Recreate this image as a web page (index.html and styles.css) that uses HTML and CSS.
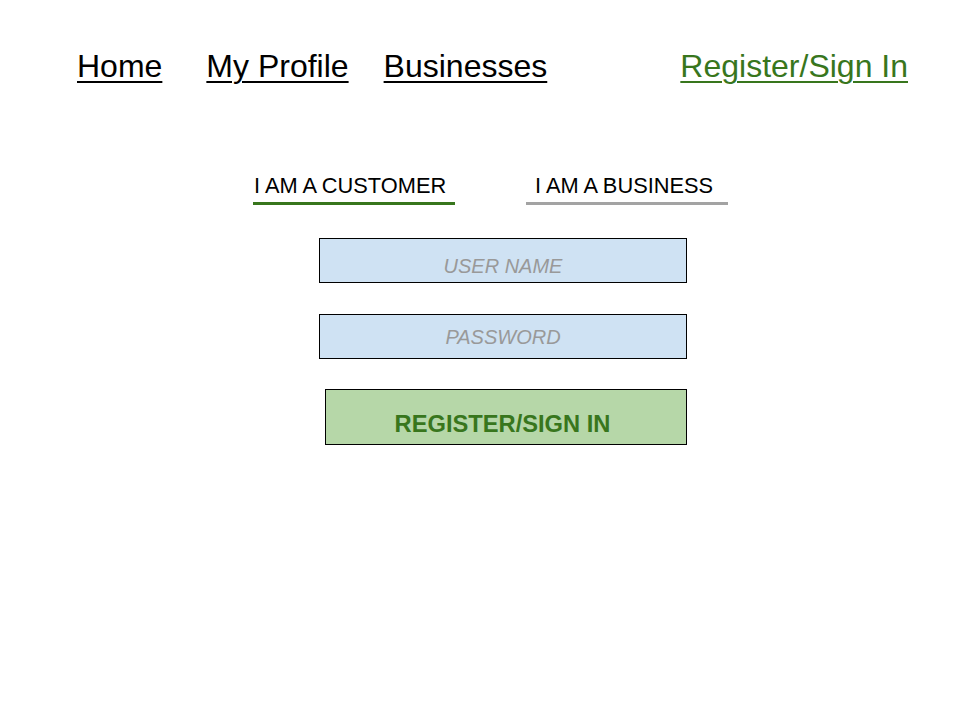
FILE: index.html
```html
<!DOCTYPE html>
<html lang="en">
<head>
    <meta charset="UTF-8">
    <meta name="viewport" content="width=device-width, initial-scale=1.0">
    <title>Register / Sign In</title>
    <link rel="stylesheet" href="styles.css">
</head>
<body>
    <div class="nav">
        <a class="nav-link nav-home" href="#">Home</a>
        <a class="nav-link nav-profile" href="#">My Profile</a>
        <a class="nav-link nav-businesses" href="#">Businesses</a>
        <a class="nav-link nav-signin" href="#">Register/Sign In</a>
    </div>

    <div class="tabs">
        <div class="tab tab-customer active">I AM A CUSTOMER</div>
        <div class="tab tab-business">I AM A BUSINESS</div>
    </div>

    <div class="login-form">
        <div class="field field-user">USER NAME</div>
        <div class="field field-pass">PASSWORD</div>
        <button class="submit-btn">REGISTER/SIGN IN</button>
    </div>
</body>
</html>
```

FILE: styles.css
```css
* {
    margin: 0;
    padding: 0;
    box-sizing: border-box;
}
body {
    font-family: 'Liberation Sans', Arial, sans-serif;
    background: #ffffff;
    color: #000000;
    width: 960px;
    height: 720px;
}
.nav {
    display: flex;
    align-items: baseline;
    padding: 48px 52px 0 77px;
}
.nav-link {
    font-size: 32px;
    line-height: 37px;
    color: #000000;
    text-decoration: underline;
    text-decoration-thickness: 2px;
    text-underline-offset: 4px;
}
.nav-profile {
    margin-left: 44px;
}
.nav-businesses {
    margin-left: 35px;
}
.nav-signin {
    margin-left: auto;
    color: #38761d;
}
.tabs {
    display: flex;
    gap: 71px;
    margin-top: 88px;
    padding-left: 253px;
}
.tab {
    width: 202px;
    font-size: 21.8px;
    line-height: 25px;
    padding-bottom: 4px;
    border-bottom: 3px solid #a3a3a3;
}
.tab-customer {
    padding-left: 1px;
}
.tab-business {
    padding-left: 9px;
}
.tab.active {
    border-bottom-color: #38761d;
}
.login-form {
    display: flex;
    flex-direction: column;
    align-items: flex-end;
    width: 368px;
    margin: 33px 0 0 319px;
}
.field {
    width: 368px;
    height: 45px;
    background: #cfe2f3;
    border: 1px solid #000000;
    color: #999999;
    font-size: 20px;
    font-style: italic;
    line-height: 22px;
    text-align: center;
}
.field-user {
    padding-top: 16px;
}
.field-pass {
    margin-top: 31px;
    padding-top: 11px;
}
.submit-btn {
    width: 362px;
    height: 56px;
    margin-top: 30px;
    padding: 14px 7px 0 0;
    background: #b6d7a8;
    border: 1px solid #000000;
    color: #38761d;
    font-family: 'Liberation Sans', Arial, sans-serif;
    font-size: 23.7px;
    font-weight: 700;
    line-height: 28px;
    text-align: center;
    cursor: pointer;
}
```
